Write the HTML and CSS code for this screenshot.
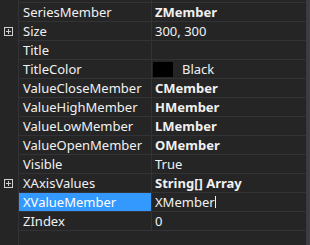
FILE: index.html
```html
<!DOCTYPE html>
<html lang="en">
  <head>
    <meta charset="UTF-8" />
    <title>Properties</title>
    <link rel="stylesheet" href="styles.css">
  </head>
  <body>
    <div class="grid">
      <div class="list">
        <div class="row clip">
          <span class="gutter"></span>
          <span class="name"></span>
          <span class="value"></span>
        </div>
        <div class="row">
          <span class="gutter"></span>
          <span class="name">SeriesMember</span>
          <span class="value bold">ZMember</span>
        </div>
        <div class="row">
          <span class="gutter"><i class="plus"></i></span>
          <span class="name">Size</span>
          <span class="value">300, 300</span>
        </div>
        <div class="row">
          <span class="gutter"></span>
          <span class="name">Title</span>
          <span class="value"></span>
        </div>
        <div class="row">
          <span class="gutter"></span>
          <span class="name">TitleColor</span>
          <span class="value"><i class="swatch"></i>Black</span>
        </div>
        <div class="row">
          <span class="gutter"></span>
          <span class="name">ValueCloseMember</span>
          <span class="value bold">CMember</span>
        </div>
        <div class="row">
          <span class="gutter"></span>
          <span class="name">ValueHighMember</span>
          <span class="value bold">HMember</span>
        </div>
        <div class="row">
          <span class="gutter"></span>
          <span class="name">ValueLowMember</span>
          <span class="value bold">LMember</span>
        </div>
        <div class="row">
          <span class="gutter"></span>
          <span class="name">ValueOpenMember</span>
          <span class="value bold">OMember</span>
        </div>
        <div class="row">
          <span class="gutter"></span>
          <span class="name">Visible</span>
          <span class="value">True</span>
        </div>
        <div class="row">
          <span class="gutter"><i class="plus"></i></span>
          <span class="name">XAxisValues</span>
          <span class="value bold">String[] Array</span>
        </div>
        <div class="row selected">
          <span class="gutter"></span>
          <span class="name">XValueMember</span>
          <span class="value">XMember<i class="caret"></i></span>
        </div>
        <div class="row">
          <span class="gutter"></span>
          <span class="name">ZIndex</span>
          <span class="value">0</span>
        </div>
        <div class="rest">
          <span class="gutter"></span>
        </div>
      </div>
      <div class="scroll"></div>
    </div>
  </body>
</html>
```

FILE: styles.css
```css
* {
  margin: 0;
  padding: 0;
  box-sizing: border-box;
}
html,
body {
  height: 100%;
  overflow: hidden;
}
body {
  background: #252526;
  color: #f1f1f1;
  font-family: "Noto Sans", "Liberation Sans", sans-serif;
  font-size: 13px;
}
.grid {
  display: flex;
  height: 100%;
}
.list {
  flex: 1;
  display: flex;
  flex-direction: column;
  border-right: 1px solid #3a3a3e;
}
.scroll {
  width: 3px;
  background: #3e3e42;
}
.row {
  display: flex;
  height: 19px;
  line-height: 18px;
}
.row.clip {
  margin-top: -16px;
}
.gutter {
  width: 19px;
  flex: none;
  border-right: 1px solid #333337;
  display: flex;
  align-items: center;
  justify-content: center;
}
.name {
  width: 133px;
  flex: none;
  padding-left: 4px;
  border-right: 1px solid #333337;
  border-bottom: 1px solid #333337;
  white-space: nowrap;
}
.value {
  flex: 1;
  padding-left: 3px;
  border-bottom: 1px solid #333337;
  white-space: nowrap;
  display: flex;
  align-items: center;
}
.bold {
  font-weight: bold;
}
.selected .name {
  background: #3399ff;
  color: #ffffff;
}
.plus {
  position: relative;
  display: block;
  width: 9px;
  height: 9px;
  border: 1px solid #d0d0d0;
  margin-left: -2px;
}
.plus::before,
.plus::after {
  content: "";
  position: absolute;
  background: #d0d0d0;
}
.plus::before {
  left: 1px;
  top: 3px;
  width: 5px;
  height: 1px;
}
.plus::after {
  left: 3px;
  top: 1px;
  width: 1px;
  height: 5px;
}
.swatch {
  display: block;
  width: 20px;
  height: 15px;
  background: #000;
  margin-left: -2px;
  margin-right: 9px;
}
.caret {
  display: block;
  width: 1px;
  height: 12px;
  background: #f1f1f1;
}
.rest {
  flex: 1;
  display: flex;
}
.rest .gutter {
  border-right: 1px solid #333337;
}
```
